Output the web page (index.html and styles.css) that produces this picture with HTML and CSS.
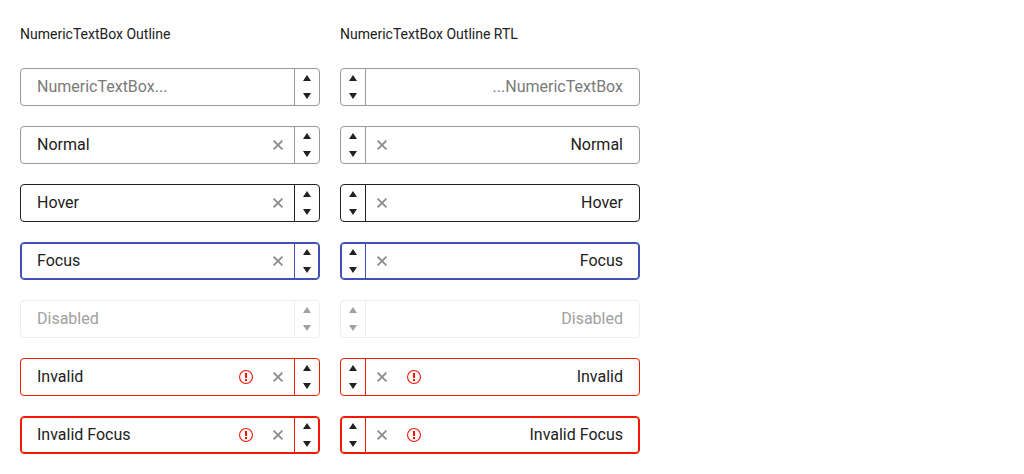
FILE: index.html
```html
<!DOCTYPE html>
<html lang="en">
<head>
<meta charset="utf-8">
<title>NumericTextBox Outline</title>
<link rel="stylesheet" href="styles.css">
</head>
<body>
<svg class="symbols" aria-hidden="true">
  <symbol id="up" viewBox="0 0 8 6"><path d="M0 6 4 0 8 6Z"/></symbol>
  <symbol id="down" viewBox="0 0 8 6"><path d="M0 0H8L4 6Z"/></symbol>
  <symbol id="clear" viewBox="0 0 16 16"><path d="M3.6 3.6 12.4 12.4M12.4 3.6 3.6 12.4" fill="none" stroke="currentColor" stroke-width="2"/></symbol>
  <symbol id="error" viewBox="0 0 16 16"><circle cx="8" cy="8" r="6.45" fill="none" stroke="currentColor" stroke-width="1.1"/><path d="M7 4H9V9H7ZM7 10H9V12H7Z"/></symbol>
</svg>
<main class="page">
  <section class="column">
    <h2 class="title">NumericTextBox Outline</h2>
    <div class="numeric">
      <input class="field" type="text" aria-label="Empty" placeholder="NumericTextBox...">
      <span class="spinner"><button class="step" type="button" aria-label="Increase"><svg class="caret"><use href="#up"/></svg></button><button class="step" type="button" aria-label="Decrease"><svg class="caret"><use href="#down"/></svg></button></span>
    </div>
    <div class="numeric">
      <input class="field" type="text" aria-label="Normal" value="Normal">
      <button class="clear" type="button" aria-label="Clear"><svg class="icon"><use href="#clear"/></svg></button>
      <span class="spinner"><button class="step" type="button" aria-label="Increase"><svg class="caret"><use href="#up"/></svg></button><button class="step" type="button" aria-label="Decrease"><svg class="caret"><use href="#down"/></svg></button></span>
    </div>
    <div class="numeric hover">
      <input class="field" type="text" aria-label="Hover" value="Hover">
      <button class="clear" type="button" aria-label="Clear"><svg class="icon"><use href="#clear"/></svg></button>
      <span class="spinner"><button class="step" type="button" aria-label="Increase"><svg class="caret"><use href="#up"/></svg></button><button class="step" type="button" aria-label="Decrease"><svg class="caret"><use href="#down"/></svg></button></span>
    </div>
    <div class="numeric focus">
      <input class="field" type="text" aria-label="Focus" value="Focus">
      <button class="clear" type="button" aria-label="Clear"><svg class="icon"><use href="#clear"/></svg></button>
      <span class="spinner"><button class="step" type="button" aria-label="Increase"><svg class="caret"><use href="#up"/></svg></button><button class="step" type="button" aria-label="Decrease"><svg class="caret"><use href="#down"/></svg></button></span>
    </div>
    <div class="numeric disabled">
      <input class="field" type="text" aria-label="Disabled" value="Disabled" disabled>
      <span class="spinner"><button class="step" type="button" aria-label="Increase" disabled><svg class="caret"><use href="#up"/></svg></button><button class="step" type="button" aria-label="Decrease" disabled><svg class="caret"><use href="#down"/></svg></button></span>
    </div>
    <div class="numeric invalid">
      <input class="field" type="text" aria-label="Invalid" value="Invalid" aria-invalid="true">
      <span class="status"><svg class="icon"><use href="#error"/></svg></span>
      <button class="clear" type="button" aria-label="Clear"><svg class="icon"><use href="#clear"/></svg></button>
      <span class="spinner"><button class="step" type="button" aria-label="Increase"><svg class="caret"><use href="#up"/></svg></button><button class="step" type="button" aria-label="Decrease"><svg class="caret"><use href="#down"/></svg></button></span>
    </div>
    <div class="numeric invalid focus">
      <input class="field" type="text" aria-label="Invalid focus" value="Invalid Focus" aria-invalid="true">
      <span class="status"><svg class="icon"><use href="#error"/></svg></span>
      <button class="clear" type="button" aria-label="Clear"><svg class="icon"><use href="#clear"/></svg></button>
      <span class="spinner"><button class="step" type="button" aria-label="Increase"><svg class="caret"><use href="#up"/></svg></button><button class="step" type="button" aria-label="Decrease"><svg class="caret"><use href="#down"/></svg></button></span>
    </div>
  </section>
  <section class="column">
    <h2 class="title">NumericTextBox Outline RTL</h2>
    <div class="numeric" dir="rtl">
      <input class="field" type="text" aria-label="Empty" placeholder="NumericTextBox...">
      <span class="spinner"><button class="step" type="button" aria-label="Increase"><svg class="caret"><use href="#up"/></svg></button><button class="step" type="button" aria-label="Decrease"><svg class="caret"><use href="#down"/></svg></button></span>
    </div>
    <div class="numeric" dir="rtl">
      <input class="field" type="text" aria-label="Normal" value="Normal">
      <button class="clear" type="button" aria-label="Clear"><svg class="icon"><use href="#clear"/></svg></button>
      <span class="spinner"><button class="step" type="button" aria-label="Increase"><svg class="caret"><use href="#up"/></svg></button><button class="step" type="button" aria-label="Decrease"><svg class="caret"><use href="#down"/></svg></button></span>
    </div>
    <div class="numeric hover" dir="rtl">
      <input class="field" type="text" aria-label="Hover" value="Hover">
      <button class="clear" type="button" aria-label="Clear"><svg class="icon"><use href="#clear"/></svg></button>
      <span class="spinner"><button class="step" type="button" aria-label="Increase"><svg class="caret"><use href="#up"/></svg></button><button class="step" type="button" aria-label="Decrease"><svg class="caret"><use href="#down"/></svg></button></span>
    </div>
    <div class="numeric focus" dir="rtl">
      <input class="field" type="text" aria-label="Focus" value="Focus">
      <button class="clear" type="button" aria-label="Clear"><svg class="icon"><use href="#clear"/></svg></button>
      <span class="spinner"><button class="step" type="button" aria-label="Increase"><svg class="caret"><use href="#up"/></svg></button><button class="step" type="button" aria-label="Decrease"><svg class="caret"><use href="#down"/></svg></button></span>
    </div>
    <div class="numeric disabled" dir="rtl">
      <input class="field" type="text" aria-label="Disabled" value="Disabled" disabled>
      <span class="spinner"><button class="step" type="button" aria-label="Increase" disabled><svg class="caret"><use href="#up"/></svg></button><button class="step" type="button" aria-label="Decrease" disabled><svg class="caret"><use href="#down"/></svg></button></span>
    </div>
    <div class="numeric invalid" dir="rtl">
      <input class="field" type="text" aria-label="Invalid" value="Invalid" aria-invalid="true">
      <span class="status"><svg class="icon"><use href="#error"/></svg></span>
      <button class="clear" type="button" aria-label="Clear"><svg class="icon"><use href="#clear"/></svg></button>
      <span class="spinner"><button class="step" type="button" aria-label="Increase"><svg class="caret"><use href="#up"/></svg></button><button class="step" type="button" aria-label="Decrease"><svg class="caret"><use href="#down"/></svg></button></span>
    </div>
    <div class="numeric invalid focus" dir="rtl">
      <input class="field" type="text" aria-label="Invalid focus" value="Invalid Focus" aria-invalid="true">
      <span class="status"><svg class="icon"><use href="#error"/></svg></span>
      <button class="clear" type="button" aria-label="Clear"><svg class="icon"><use href="#clear"/></svg></button>
      <span class="spinner"><button class="step" type="button" aria-label="Increase"><svg class="caret"><use href="#up"/></svg></button><button class="step" type="button" aria-label="Decrease"><svg class="caret"><use href="#down"/></svg></button></span>
    </div>
  </section>
</main>
</body>
</html>
```
FILE: styles.css
```css
* {
  box-sizing: border-box;
}

body {
  margin: 0;
  background: #fff;
  color: #212121;
  font-family: Roboto, "Liberation Sans", sans-serif;
  font-size: 14px;
  line-height: 28px;
}

.symbols {
  display: none;
}

.page {
  display: grid;
  grid-template-columns: repeat(2, minmax(0, 300px));
  gap: 20px;
  padding: 20px;
}

.column {
  display: flex;
  flex-direction: column;
  gap: 20px;
}

.title {
  margin: 0;
  font-size: 14px;
  font-weight: 400;
}

.numeric {
  --edge: #999;
  display: flex;
  border: 1px solid var(--edge);
  border-radius: 4px;
  font-size: 16px;
}

.hover {
  --edge: #212121;
}

.focus {
  --edge: #3f51b5;
  box-shadow: inset 0 0 0 1px var(--edge);
}

.disabled {
  --edge: #ededed;
}

.invalid {
  --edge: #f31700;
}

.field {
  flex: 1;
  min-width: 0;
  margin: 0;
  padding: 4px 16px;
  border: 0;
  outline: 0;
  background: transparent;
  color: inherit;
  font: inherit;
  line-height: 28px;
}

.field::placeholder {
  color: #7a7a7a;
  opacity: 1;
}

.field:disabled {
  color: #a0a0a0;
}

.clear,
.status {
  display: flex;
  align-items: center;
  justify-content: center;
  width: 32px;
  padding: 0;
  border: 0;
  background: transparent;
  color: #909090;
}

.status {
  color: #f31700;
}

.icon {
  width: 16px;
  height: 16px;
  fill: currentColor;
}

.spinner {
  display: flex;
  flex-direction: column;
  width: 25px;
  border-inline-start: 1px solid var(--edge);
}

.step {
  display: flex;
  flex: 1;
  align-items: center;
  justify-content: center;
  padding: 0;
  border: 0;
  background: transparent;
  color: #212121;
}

.step:disabled {
  color: #a0a0a0;
}

.caret {
  width: 8px;
  height: 6px;
  fill: currentColor;
}
```
